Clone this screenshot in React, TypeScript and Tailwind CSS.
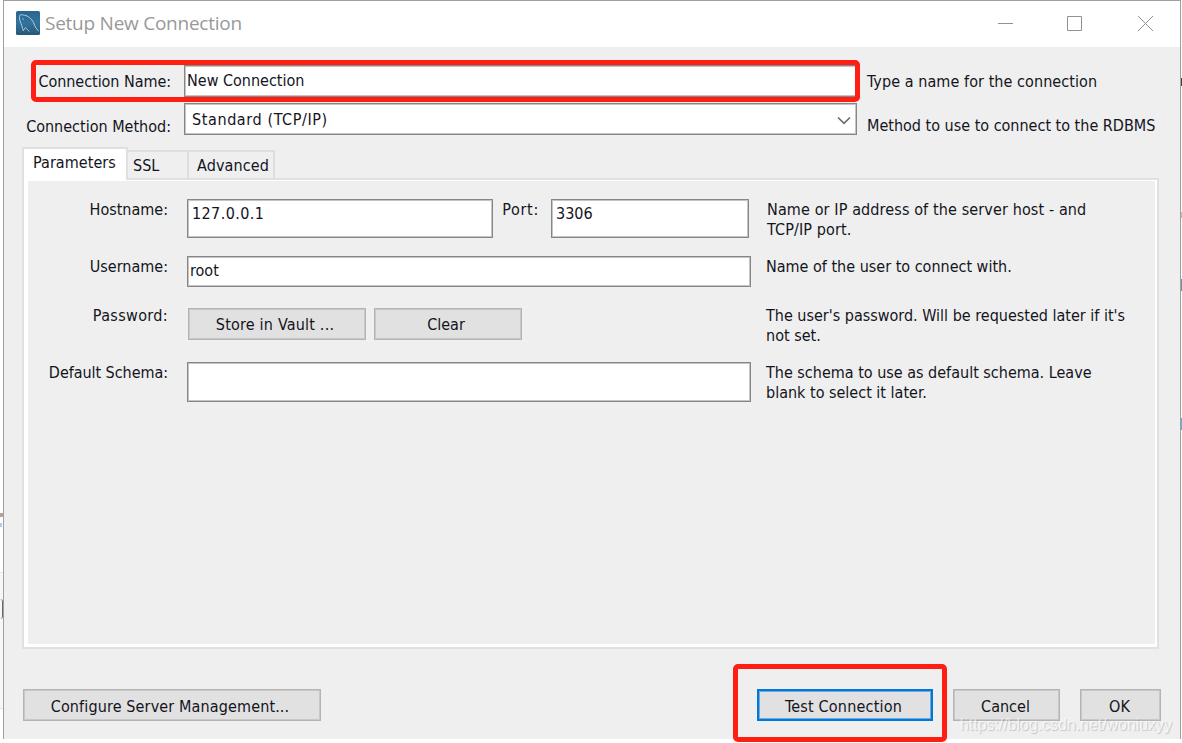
import type { ReactNode } from "react";

function Label({ children, className = "" }: { children: ReactNode; className?: string }) {
  return <span className={`block whitespace-nowrap text-right leading-5 ${className}`}>{children}</span>;
}

function Field({ value, className }: { value?: string; className: string }) {
  return (
    <div
      className={`border border-[#868686] bg-white leading-5 whitespace-nowrap shadow-[inset_0_0_0_1px_#c4c4c4] ${className}`}
    >
      {value}
    </div>
  );
}

function Button({ children, className }: { children: ReactNode; className: string }) {
  return (
    <button
      className={`flex h-8 shrink-0 items-center justify-center bg-[#e1e1e1] whitespace-nowrap ${className}`}
    >
      <span>{children}</span>
    </button>
  );
}

const plain = "border border-[#b4b4b4] shadow-[inset_0_0_0_1px_#c8c8c8]";

function Description({ lines, className = "" }: { lines: string[]; className?: string }) {
  return (
    <div className={`whitespace-nowrap ${className}`}>
      {lines.map((line) => (
        <div key={line} className="h-[19.5px] leading-5">
          {line}
        </div>
      ))}
    </div>
  );
}

function DolphinIcon() {
  return (
    <svg width="24" height="24" viewBox="0 0 24 24" fill="none">
      <defs>
        <linearGradient id="tile" x1="0" y1="0" x2="0" y2="1">
          <stop offset="0" stopColor="#2a6591" />
          <stop offset="0.5" stopColor="#33739c" />
          <stop offset="1" stopColor="#265878" />
        </linearGradient>
      </defs>
      <rect width="24" height="24" rx="1.5" fill="url(#tile)" />
      <path
        d="M7.2 19.500C6.200 18.500 6.500 16.500 5.800 14.500C5 12 3.800 10.500 3.600 8C3.500 6 3.200 4.600 4.200 3.900C5.200 3.300 7 4.200 8.500 4.200C12 4.800 15.500 7.500 17.500 11.500C18.600 13.500 18.800 15.500 20 17C21 18.200 21.800 18.700 22.300 19.800M7.200 19.500C8.600 19 8.200 17 9.400 16.800C10.700 17 11.500 19.300 13 20.300"
        stroke="#b4cddb"
        strokeWidth="1"
        strokeLinecap="round"
      />
      <path d="M6.500 7.300L7.600 8.700" stroke="#b4cddb" />
    </svg>
  );
}

function TitleBar() {
  return (
    <header className="flex h-[46px] shrink-0 bg-white">
      <div className="mt-[10px] ml-3 h-6 w-6">
        <DolphinIcon />
      </div>
      <h1 className="mt-2 ml-[5px] font-['Open_Sans',sans-serif] text-[19px] leading-7 tracking-[-0.25px] whitespace-nowrap text-[#999999] [font-stretch:normal]">
        Setup New Connection
      </h1>
      <svg className="mt-[14px] mr-[26px] ml-auto" width="156" height="17" fill="none" stroke="#929292">
        <path d="M0 8.500H15M69.500 1.500H83.500V15.500H69.500ZM140 1L155 16M155 1L140 16" />
      </svg>
    </header>
  );
}

function ConnectionRows() {
  return (
    <section className="flex h-[90px] shrink-0">
      <div className="w-[167px] pt-[25px]">
        <Label className="tracking-[-0.05px]">Connection Name:</Label>
        <Label className="mt-[25px]">Connection Method:</Label>
      </div>
      <div className="ml-[13px] w-[673px] pt-[18px]">
        <Field value="New Connection" className="h-8 pt-[5px] pl-0.5" />
        <div className="mt-[6px] flex h-8 justify-between border border-[#868686] bg-white pt-1.5 pl-[7px] leading-5 shadow-[inset_0_0_0_1px_#c4c4c4]">
          <span className="tracking-[0.6px]">Standard (TCP/IP)</span>
          <svg className="mt-1.5 mr-[5px]" width="14" height="9" fill="none" stroke="#6c6c6c" strokeWidth="1.7">
            <path d="M1 1.500L7 7.300L13 1.500" />
          </svg>
        </div>
      </div>
      <div className="ml-[10px] pt-[25px] whitespace-nowrap">
        <p className="leading-5 tracking-[0.07px]">Type a name for the connection</p>
        <p className="mt-[24px] leading-5">Method to use to connect to the RDBMS</p>
      </div>
    </section>
  );
}

function Tabs() {
  return (
    <nav className="mt-[10px] ml-[18px] flex h-[31px] shrink-0 items-end whitespace-nowrap">
      <div className="relative z-10 -mb-0.5 h-[33px] w-[106px] border-2 border-b-0 border-[#e0e0e0] bg-white pt-1 pl-[9px] leading-5 tracking-[0.05px]">
        Parameters
      </div>
      <div className="h-7 w-[59px] border-t-2 border-[#dedede] pt-1 pl-[5px] leading-5">SSL</div>
      <div className="h-7 w-[88px] border-2 border-b-0 border-[#dedede] pt-1 pl-2 leading-5 tracking-[0.1px]">
        Advanced
      </div>
    </nav>
  );
}

function Panel() {
  return (
    <section className="ml-[18px] h-[471px] w-[1137px] shrink-0 border-2 border-[#e0e0e0]">
      <div className="h-full border-t border-r-2 border-b-[3px] border-l-4 border-white pt-[18px]">
        <div className="flex h-[57px]">
          <Label className="w-[140px] pt-px">Hostname:</Label>
          <Field value="127.0.0.1" className="ml-[19px] h-[39px] w-[306px] pt-1 pl-1 tracking-[0.4px]" />
          <Label className="w-[46px] pt-px tracking-[0.7px]">Port:</Label>
          <Field value="3306" className="mr-0.5 ml-[12px] h-[39px] w-[198px] pt-1 pl-1" />
          <Description
            className="-mr-2 ml-4 pt-px tracking-[0.12px]"
            lines={["Name or IP address of the server host - and", "TCP/IP port."]}
          />
        </div>
        <div className="flex h-[52px]">
          <Label className="w-[140px] pt-px">Username:</Label>
          <Field value="root" className="ml-[19px] h-[31px] w-[564px] pt-1 pl-0.5" />
          <Description className="ml-[15px] pt-px" lines={["Name of the user to connect with."]} />
        </div>
        <div className="flex h-[54px]">
          <Label className="-mt-0.5 w-[140px] tracking-[0.35px]">Password:</Label>
          <Button className={`ml-5 w-[178px] pt-0.5 pr-1 tracking-[0.2px] ${plain}`}>Store in Vault ...</Button>
          <Button className={`mr-[229px] ml-2 w-[148px] pt-0.5 pr-1 ${plain}`}>Clear</Button>
          <Description
            className="-mt-0.5 ml-[15px]"
            lines={["The user's password. Will be requested later if it's", "not set."]}
          />
        </div>
        <div className="flex h-10">
          <Label className="w-[140px] pt-px tracking-[-0.05px]">Default Schema:</Label>
          <Field className="ml-[19px] h-10 w-[564px]" />
          <Description
            className="ml-[15px] pt-px"
            lines={["The schema to use as default schema. Leave", "blank to select it later."]}
          />
        </div>
      </div>
    </section>
  );
}

function Footer() {
  return (
    <footer className="mt-10 ml-[19px] flex shrink-0">
      <Button className={`w-[298px] pt-1 pr-1 tracking-[0.13px] ${plain}`}>Configure Server Management...</Button>
      <Button className="ml-[436px] w-[176px] border-2 border-[#0078d7] pt-1 pr-[3px] tracking-[0.2px] shadow-[inset_0_0_0_1px_#6fabdd]">
        Test Connection
      </Button>
      <Button className={`ml-[20px] w-[107px] pt-1 pr-0.5 ${plain}`}>Cancel</Button>
      <Button className={`ml-[20px] w-[81px] pt-1 pr-0.5 ${plain}`}>OK</Button>
    </footer>
  );
}

export default function App() {
  return (
    <main className="relative flex h-[743px] w-[1182px] overflow-hidden bg-white font-['DejaVu_Sans_Condensed','DejaVu_Sans',sans-serif] text-[16px] text-[#14141c] [font-stretch:condensed]">
      <div className="w-[3px] shrink-0 pt-[513px]">
        <div className="h-1 w-[3px] bg-[#b2a69a]" />
        <div className="mt-1.5 h-1 w-0.5 bg-[#a9cdf5]" />
        <div className="mt-[45px] h-[137px] border-y border-[#e5e5e5] bg-[#f7f7f7] pt-[26px]">
          <div className="h-5 w-[3px] rounded-r-full border-r border-[#75665c]" />
        </div>
      </div>
      <div className="flex h-[739px] w-[1178px] shrink-0 flex-col border border-b-0 border-[#a0a0a0] bg-[#efefef]">
        <TitleBar />
        <ConnectionRows />
        <Tabs />
        <Panel />
        <Footer />
      </div>
      <div className="w-px shrink-0 pt-[78px]">
        <div className="h-2 bg-[#44454b]" />
        <div className="mt-[126px] h-1.5 bg-[#c7bba9]" />
        <div className="mt-[61px] h-3 bg-[#7f8ba0]" />
        <div className="mt-[127px] h-3 bg-[#66a9d8]" />
      </div>
      <div className="absolute top-[60px] left-[31px] h-[42px] w-[829px] rounded-[5px] border-5 border-[#ff1e12]" />
      <div className="absolute top-[664px] left-[733px] h-[78px] w-[214px] rounded-[5px] border-5 border-[#ff1e12]" />
      <div className="absolute top-[715px] left-[960px] font-['Liberation_Sans',sans-serif] text-[16px] leading-5 tracking-[-0.05px] whitespace-nowrap text-white/70 [text-shadow:1px_1px_1px_rgba(0,0,0,0.18)]">
        https://blog.csdn.net/woniuxyy
      </div>
    </main>
  );
}
